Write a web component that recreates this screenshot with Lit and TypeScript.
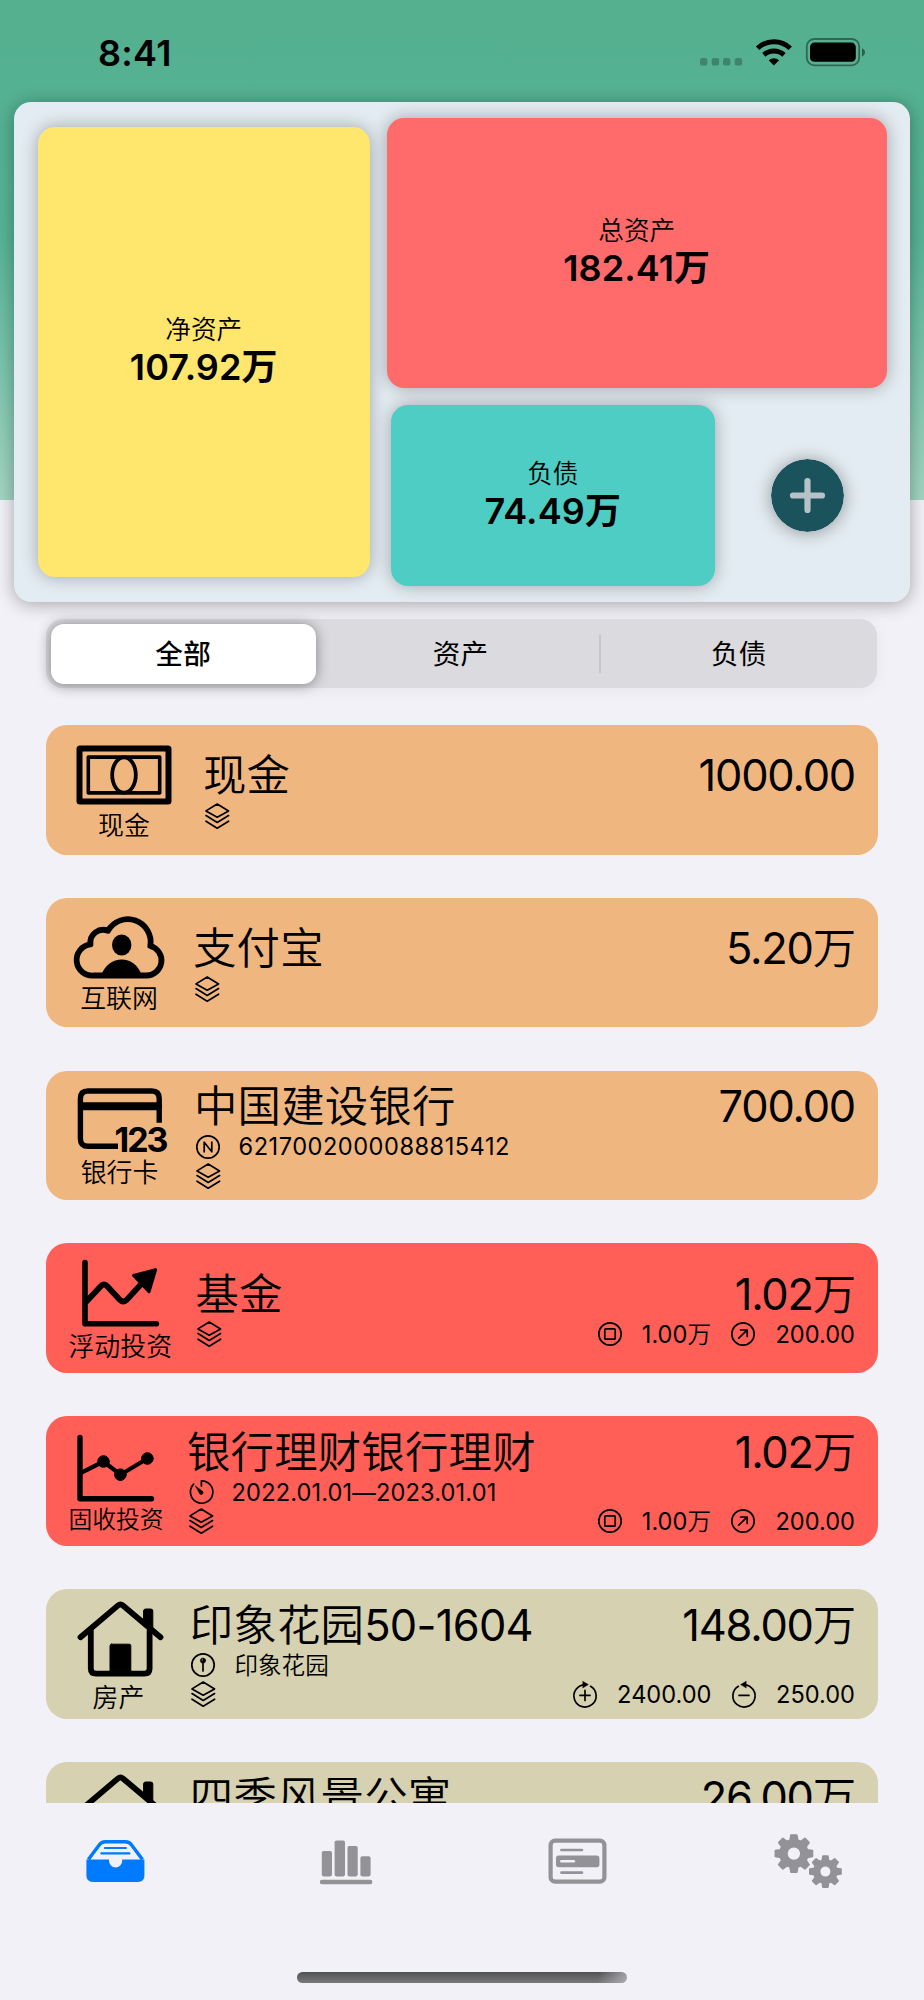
import { LitElement, html, svg, css, TemplateResult, SVGTemplateResult } from "lit";
import { customElement, property, state } from "lit/decorators.js";
import { classMap } from "lit/directives/class-map.js";

type Kind = "cash" | "cloud" | "bank" | "float" | "fixed" | "house";
type Glyph = "layers" | "number" | "clock" | "pin" | "principal" | "gain" | "income" | "expense";

interface Account {
  kind: Kind;
  label: string;
  title: string;
  amount: string;
  tone: "orange" | "red" | "khaki";
  detail?: { icon: Glyph; text: string };
  extras?: { icon: Glyph; text: string }[];
}

const ACCOUNTS: Account[] = [
  { kind: "cash", label: "现金", title: "现金", amount: "1000.00", tone: "orange" },
  { kind: "cloud", label: "互联网", title: "支付宝", amount: "5.20万", tone: "orange" },
  { kind: "bank", label: "银行卡", title: "中国建设银行", amount: "700.00", tone: "orange",
    detail: { icon: "number", text: "6217002000088815412" } },
  { kind: "float", label: "浮动投资", title: "基金", amount: "1.02万", tone: "red",
    extras: [{ icon: "principal", text: "1.00万" }, { icon: "gain", text: "200.00" }] },
  { kind: "fixed", label: "固收投资", title: "银行理财银行理财", amount: "1.02万", tone: "red",
    detail: { icon: "clock", text: "2022.01.01—2023.01.01" },
    extras: [{ icon: "principal", text: "1.00万" }, { icon: "gain", text: "200.00" }] },
  { kind: "house", label: "房产", title: "印象花园50-1604", amount: "148.00万", tone: "khaki",
    detail: { icon: "pin", text: "印象花园" },
    extras: [{ icon: "income", text: "2400.00" }, { icon: "expense", text: "250.00" }] },
  { kind: "house", label: "房产", title: "四季风景公寓", amount: "26.00万", tone: "khaki",
    detail: { icon: "pin", text: "四季风景公寓" },
    extras: [{ icon: "income", text: "2400.00" }, { icon: "expense", text: "250.00" }] },
];

/* Height of each category drawing; every drawing is centred on 0,0. */
const KIND_HEIGHT: Record<Kind, number> = { cash: 70, cloud: 72, bank: 74, float: 75, fixed: 77, house: 86 };

const KIND_ART: Record<Kind, SVGTemplateResult> = {
  cash: svg`
    <rect x="-44.5" y="-26.5" width="89" height="53" rx="0.5" stroke-width="6"/>
    <rect x="-35.7" y="-17.9" width="71.4" height="35.8" stroke-width="3.6"/>
    <ellipse cx="0" cy="0" rx="11.8" ry="17.6" stroke-width="3.8"/>`,
  cloud: svg`
    <path stroke-width="5.8" d="M-25 27.5 A15.6 15.6 0 0 1 -28.5 -3.6 A12.8 12.8 0 0 1 -11 -17.2 A22.8 22.8 0 0 1 31.3 -2 A15 15 0 0 1 27 27.5 Z"/>
    <ellipse cx="2.7" cy="-3" rx="9.7" ry="10.6" class="fill" stroke="none"/>
    <path class="fill" stroke="none" d="M-18.4 28.5C-14 16.5 -6 11.6 2.7 11.6S19 16.5 23.4 28.5Z"/>`,
  bank: svg`
    <path stroke-width="5.4" stroke-linecap="butt" d="M39.2 1.8V-22.5Q39.2 -30 31.7 -30H-32Q-39.6 -30 -39.6 -22.5V17.7Q-39.6 25.3 -32 25.3H-2"/>
    <path stroke-width="8" d="M-38 -14.7H38"/>
    <text x="-5.5" y="31" textLength="54">123</text>`,
  float: svg`
    <path stroke-width="5.6" d="M-35 -31V30.2H36.4"/>
    <path stroke-width="5.8" d="M-33.5 8L-19.5 -7Q-16 -11 -12.5 -7L-0.5 6Q3.2 10 7 6L24 -12.5"/>
    <path class="fill" stroke-width="3" d="M35.6 -23.8L13.6 -18L29 -1.8Z"/>`,
  fixed: svg`
    <path stroke-width="5.4" d="M-36 -29V32.2H35.5"/>
    <path stroke-width="4.2" d="M-35 6.3L-12.5 -5L4.4 8.2L31.4 -8"/>
    <circle cx="-12.5" cy="-5" r="5.8" class="fill"/>
    <circle cx="4.4" cy="8.2" r="5.8" class="fill"/>
    <circle cx="31.4" cy="-8" r="5.8" class="fill"/>`,
  house: svg`
    <path stroke-width="5.8" d="M-38.5 -1.8L-0.9 -33.6Q1.5 -35.6 3.9 -33.6L41.5 -1.8"/>
    <path stroke-width="5.8" d="M-28.2 -8V29.5Q-28.2 34.6 -23 34.6H25.4Q30.6 34.6 30.6 29.5V-8"/>
    <rect class="fill" x="-9" y="5.2" width="20.8" height="30" rx="1.5"/>
    <path class="fill" d="M24.6 -14V-28Q24.6 -30 26.6 -30H31.8Q33.8 -30 33.8 -28V-7Z"/>`,
};

const GLYPHS: Record<Glyph, SVGTemplateResult> = {
  layers: svg`<path d="M12.2 1L23.6 7.9L12.2 14.2L1 7.9ZM1 12.6L12.2 19.4L23.6 12.6M1 18.2L12.2 25.2L23.6 18.2"/>`,
  number: svg`<circle cx="12" cy="13" r="11.2"/><path d="M8.2 17.8V8.2L15.8 17.8V8.2"/>`,
  clock: svg`<path d="M4.6 5.2A11.2 11.2 0 1 0 12.4 1.8V7"/>
    <path class="fill" stroke-width="0.6" d="M6.6 7.2L13.8 12.6A1.9 1.9 0 0 1 11.2 15.2Z"/>`,
  pin: svg`<circle cx="12" cy="13" r="11.2"/><circle class="fill" stroke-width="0.4" cx="12" cy="8.6" r="2.7"/><path d="M12 11V19"/><circle cx="11.3" cy="7.8" r=".6" fill="#d6d1b0" stroke="none"/>`,
  principal: svg`<circle cx="12" cy="13" r="11.2"/><rect x="6.8" y="7.8" width="10.4" height="10.4" rx="1"/>`,
  gain: svg`<circle cx="12" cy="13" r="11.2"/><path d="M7.8 17.2L16 9.2M9.6 9H16.2V15.4"/>`,
  income: svg`<path d="M12 3.8A11.1 11.1 0 1 0 17.6 5.3"/><path class="fill" stroke-width="0.5" d="M10 0.4L15.4 3.6L10 6.8Z"/><path d="M12 9.4V19.4M7 14.4H17"/>`,
  expense: svg`<path d="M12 3.8A11.1 11.1 0 1 1 6.4 5.3"/><path class="fill" stroke-width="0.5" d="M14 0.4L8.6 3.6L14 6.8Z"/><path d="M7 14.4H17"/>`,
};

function gear(cx: number, cy: number, outer: number, root: number, hole: number): string {
  const pts: string[] = [];
  const at = (r: number, deg: number) => {
    const a = (deg * Math.PI) / 180;
    return `${(cx + r * Math.cos(a)).toFixed(2)} ${(cy + r * Math.sin(a)).toFixed(2)}`;
  };
  for (let i = 0; i < 8; i++) {
    const c = i * 45;
    pts.push(at(root, c - 16), at(outer, c - 9), at(outer, c + 9), at(root, c + 16));
  }
  return `M${pts.join("L")}Z M${cx - hole} ${cy}a${hole} ${hole} 0 1 0 ${2 * hole} 0a${hole} ${hole} 0 1 0 ${-2 * hole} 0Z`;
}

/* Latin runs keep the regular weight while the Chinese characters around them are drawn lighter. */
function mixed(text: string): (string | TemplateResult)[] {
  return text.split(/([\x20-\x7e—]+)/).filter(Boolean)
    .map((run) => (/^[\x20-\x7e—]/.test(run) ? html`<span class="latin">${run}</span>` : run));
}

const TABS: SVGTemplateResult[] = [
  svg`<path d="M-29 -1.5V14.5Q-29 21 -22.5 21H22.5Q29 21 29 14.5V-1.5Z"/>
      <path fill="none" stroke="currentColor" stroke-width="3.6" stroke-linejoin="round" d="M-27 -1.5L-16.5 -15.5Q-14 -19.2 -10 -19.2H10Q14 -19.2 16.5 -15.5L27 -1.5"/>
      <path class="paper" d="M-24.2 -2L-14.6 -15Q-13 -17 -10 -17H10Q13 -17 14.6 -15L24.2 -2H6.8V-0.2A6.4 6.6 0 0 1 -6.4 -0.2V-2Z"/>
      <path stroke="currentColor" stroke-width="2.2" stroke-linecap="round" d="M-10.5 -13H10.5M-14 -7.6H14"/>`,
  svg`<rect x="-24.6" y="-10" width="10.2" height="25.4" rx="1.8"/>
      <rect x="-11.8" y="-20.6" width="10.4" height="36" rx="1.8"/>
      <rect x="1.1" y="-15" width="10.2" height="30.4" rx="1.8"/>
      <rect x="14" y="-4.8" width="10.2" height="20.2" rx="1.8"/>
      <rect x="-26.6" y="18.8" width="52.6" height="4.4" rx="2.2"/>`,
  svg`<rect x="-26.8" y="-20.3" width="53.8" height="41" rx="4.5" fill="none" stroke="currentColor" stroke-width="4.2"/>
      <rect x="-21.4" y="-5.4" width="43.4" height="11.6" rx="2.6"/>
      <path fill="none" stroke="currentColor" stroke-width="2.6" stroke-linecap="round" d="M-16 -11H4.6M-16 11.6H4.6"/>
      <path class="paper-line" d="M-16 .3H-3.6"/>`,
  svg`<path fill-rule="evenodd" stroke="currentColor" stroke-width="1.6" stroke-linejoin="round" d="${gear(-14.5, -7.4, 18.8, 14, 7)}"/>
      <path fill-rule="evenodd" stroke="currentColor" stroke-width="1.6" stroke-linejoin="round" d="${gear(17, 10.6, 15.8, 11.6, 5.8)}"/>`,
];

@customElement("status-bar")
export class StatusBar extends LitElement {
  static styles = css`
    :host { display: flex; justify-content: space-between; align-items: flex-start; height: 101.5px; padding: 31px 57px 0 98px; box-sizing: border-box; }
    .time { font-size: 36px; line-height: 44px; font-weight: 600; letter-spacing: 0.3px; }
    .icons { display: flex; }
  `;
  render() {
    return html`
      <span class="time">8:41</span>
      <svg class="icons" width="168" height="44" viewBox="699 31 168 44">
        <g fill="#000" fill-opacity=".25">
          <rect x="700" y="58" width="7.4" height="7.6" rx="2.2"/><rect x="711.7" y="58" width="7.4" height="7.6" rx="2.2"/>
          <rect x="723" y="58" width="7.4" height="7.6" rx="2.2"/><rect x="734.7" y="58" width="7.4" height="7.6" rx="2.2"/>
        </g>
        <g fill="none" stroke="#000" stroke-width="5">
          <path d="M757.6 48.2A23.6 23.6 0 0 1 790.2 48.2"/>
          <path d="M763.8 54.8A15 15 0 0 1 784 54.8"/>
        </g>
        <path d="M773.9 65.6L768.7 60.2A7.8 7.8 0 0 1 779.1 60.2Z"/>
        <rect x="806.8" y="39" width="52.4" height="26.4" rx="7.6" fill="none" stroke="#000" stroke-opacity=".42" stroke-width="1.8"/>
        <rect x="810" y="42.6" width="45.8" height="19.2" rx="4.4"/>
        <path d="M862 48.2Q865 49.4 865 52.3T862 56.6Z" fill-opacity=".45"/>
      </svg>`;
  }
}

@customElement("summary-panel")
export class SummaryPanel extends LitElement {
  static styles = css`
    :host { display: flex; gap: 17px; height: 500.5px; margin: 0 14px; padding: 16.5px 23.5px 0; box-sizing: border-box;
      border-radius: 17px; background: #e3ecf2; box-shadow: 0 2px 18px rgba(0, 0, 0, 0.33); }
    .tile { display: flex; flex-direction: column; align-items: center; justify-content: center; border-radius: 17px;
      box-shadow: 0 0 17px rgba(0, 0, 0, 0.3); box-sizing: border-box; padding-bottom: 2px; }
    .label { font-size: 25.6px; line-height: 33px; font-weight: 350; }
    .value { font-size: 36px; line-height: 43px; font-weight: 600; letter-spacing: 0.1px; }
    .net { width: 332.5px; height: 450px; margin-top: 9px; background: #ffe66d; }
    .side { display: flex; flex-direction: column; gap: 17px; }
    .assets { width: 499.5px; height: 270px; background: #ff6b6b; }
    .row { display: flex; align-items: center; padding-left: 4px; gap: 56px; }
    .debt { width: 323.5px; height: 180.5px; background: #4ecdc4; padding-bottom: 1px; }
    .add { display: block; width: 73px; height: 73px; border-radius: 50%; box-shadow: 0 1px 17px rgba(0, 0, 0, 0.36); }
  `;
  private tile(cls: string, label: string, value: string): TemplateResult {
    return html`<div class="tile ${cls}"><span class="label">${label}</span><span class="value">${value}</span></div>`;
  }
  render() {
    return html`
      ${this.tile("net", "净资产", "107.92万")}
      <div class="side">
        ${this.tile("assets", "总资产", "182.41万")}
        <div class="row">
          ${this.tile("debt", "负债", "74.49万")}
          <svg class="add" viewBox="0 0 73 73">
            <circle cx="36.5" cy="36.5" r="36.5" fill="#1a535c"/>
            <path d="M36.5 22V51M22 36.5H51" stroke="#b7c2c8" stroke-width="6.2" stroke-linecap="round"/>
          </svg>
        </div>
      </div>`;
  }
}

@customElement("segment-bar")
export class SegmentBar extends LitElement {
  @state() private active = 0;
  static styles = css`
    :host { display: grid; grid-template-columns: 265.5px 1fr 1fr; height: 69px; margin: 17px 47px 0 46px; padding: 4.5px; box-sizing: border-box;
      border-radius: 17px; background: #dbdadf; box-shadow: 0 2px 16px rgba(0, 0, 0, 0.05); }
    .seg { display: flex; align-items: center; justify-content: center; border-radius: 13px; font-size: 27.6px; letter-spacing: 0.3px; padding: 0 0 3px 11px; }
    .active { background: #fff; font-weight: 500; padding-left: 0; box-shadow: 0 1px 13px rgba(0, 0, 0, 0.42); }
    .seg.ruled { border-radius: 0; background: linear-gradient(#c5c5ca, #c5c5ca) left 5px center / 2px 38px no-repeat; }
  `;
  render() {
    return ["全部", "资产", "负债"].map((t, i) => html`
      <div class=${classMap({ seg: true, active: i === this.active, ruled: i > this.active + 1 })}
        @click=${() => (this.active = i)}>${t}</div>`);
  }
}

@customElement("account-card")
export class AccountCard extends LitElement {
  @property({ attribute: false }) account!: Account;
  static styles = css`
    :host { display: block; }
    .card { display: flex; align-items: center; height: 129.6px; padding: 0 22px; box-sizing: border-box; border-radius: 21px; font-weight: 350; }
    .latin { font-weight: 400; }
    .orange { background: #efb680; }
    .red { background: #ff5f56; }
    .khaki { background: #d6d1b0; }
    .kind { display: flex; flex-direction: column; align-items: center; margin-right: 23px; flex: none; }
    .art { display: block; overflow: visible; fill: none; stroke: #000; stroke-linecap: round; stroke-linejoin: round; }
    .art .fill, .glyph .fill { fill: #000; }
    .art text { font: 700 34px Inter, sans-serif; fill: #000; stroke: none; }
    .kind .name { font-size: 25.9px; line-height: 30px; white-space: nowrap; margin: 0.4px 0 -1.4px; }
    .w-cash { width: 112px; } .w-cloud { width: 102px; } .w-bank { width: 103px; }
    .w-float { width: 104.5px; } .w-fixed { width: 96px; } .w-house { width: 101px; }
    .kind.w-house { margin-right: 20.8px; }
    .kind.w-fixed .name { font-size: 23.8px; }
    .body, .sums { display: flex; flex-direction: column; }
    .body { flex: 1; }
    .body .line { padding-left: 1.6px; gap: 19px; }
    .sums { align-self: stretch; align-items: flex-end; justify-content: center; padding-right: 1px; }
    .title { height: 52px; line-height: 52px; font-size: 43.4px; letter-spacing: 0.2px; white-space: nowrap; }
    .title .latin { letter-spacing: -0.7px; }
    .amount { height: 52px; line-height: 53px; font-size: 43.4px; letter-spacing: -1.2px; }
    .line { display: flex; align-items: center; gap: 20px; height: 29px; font-size: 23.6px; line-height: 29px; white-space: nowrap; }
    .account-no { letter-spacing: 0.5px; }
    .term { letter-spacing: 0.13px; }
    .pairs { display: flex; gap: 20.5px; }
    .glyph { display: block; overflow: visible; fill: none; stroke: #000; stroke-width: 1.7; stroke-linejoin: round; stroke-linecap: round; }
  `;
  private line(icon: Glyph, text = ""): TemplateResult {
    return html`<div class="line">
      <svg class="glyph" width="24" height="26" viewBox="0 0 24 26">${GLYPHS[icon]}</svg>
      ${text ? html`<span class=${classMap({ "account-no": icon === "number", term: icon === "clock" })}>${mixed(text)}</span>` : ""}</div>`;
  }
  render() {
    const a = this.account;
    const h = KIND_HEIGHT[a.kind];
    return html`<div class="card ${a.tone}">
      <div class="kind w-${a.kind}">
        <svg class="art" width="100" height=${h} viewBox="-50 ${-h / 2} 100 ${h}">${KIND_ART[a.kind]}</svg>
        <span class="name">${a.label}</span>
      </div>
      <div class="body">
        <div class="title">${mixed(a.title)}</div>
        ${a.detail ? this.line(a.detail.icon, a.detail.text) : ""}
        ${this.line("layers")}
      </div>
      <div class="sums">
        <div class="amount">${mixed(a.amount)}</div>
        ${a.detail ? html`<div class="line"></div>` : ""}
        <div class="line pairs">${(a.extras ?? []).map((e) => this.line(e.icon, e.text))}</div>
      </div>
    </div>`;
  }
}

@customElement("tab-bar")
export class TabBar extends LitElement {
  static styles = css`
    :host { display: flex; flex-direction: column; align-items: center; justify-content: space-between; flex: none; height: 197px; padding: 28px 0 17px; box-sizing: border-box; background: #f2f1f7; }
    .tabs { display: grid; grid-template-columns: repeat(4, 1fr); justify-items: center; width: 100%; }
    .tab { color: #939297; fill: currentColor; }
    .tab.on { color: #007aff; }
    .paper { fill: #f2f1f7; }
    .paper-line { stroke: #f2f1f7; stroke-width: 2.6; stroke-linecap: round; }
    .home { width: 330px; height: 11px; border-radius: 6px;
      background: linear-gradient(100deg, transparent 91%, rgba(190, 190, 194, 0.75)), linear-gradient(#505153, #79797b); }
  `;
  render() {
    return html`
      <div class="tabs">
        ${TABS.map((t, i) => html`<svg class=${classMap({ tab: true, on: i === 0 })} width="70" height="60" viewBox="-34.4 -30 70 60">${t}</svg>`)}
      </div>
      <div class="home"></div>`;
  }
}

@customElement("app-root")
export class AppRoot extends LitElement {
  static styles = css`
    :host { display: flex; flex-direction: column; height: 2000px; overflow: hidden; color: #000;
      font-family: Inter, "Noto Sans CJK SC", sans-serif;
      background: linear-gradient(#54b08f 0, #55b293 150px, #58b496 240px, #74c1a8 340px, #a3d6c2 500px) 0 0 / 100% 500px no-repeat #f2f1f7; }
    .list { display: flex; flex-direction: column; gap: 43.2px; flex: 1; min-height: 0; overflow: hidden; margin-top: 16px; padding: 21px 46px 0; }
    .list account-card { flex: none; }
  `;
  render() {
    return html`
      <status-bar></status-bar>
      <summary-panel></summary-panel>
      <segment-bar></segment-bar>
      <div class="list">${ACCOUNTS.map((a) => html`<account-card .account=${a}></account-card>`)}</div>
      <tab-bar></tab-bar>`;
  }
}
